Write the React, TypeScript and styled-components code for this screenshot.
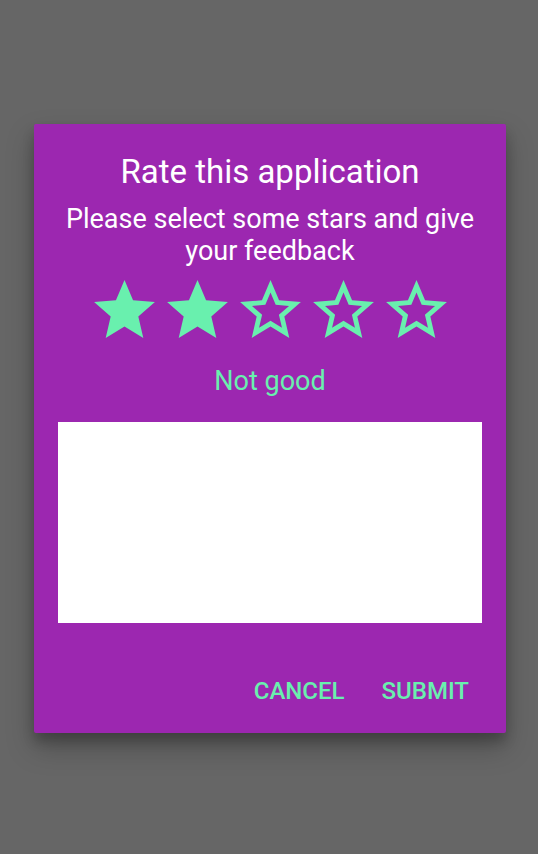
import React, { useState } from "react";
import styled, { createGlobalStyle } from "styled-components";

const GlobalStyle = createGlobalStyle`
  html, body {
    margin: 0;
    padding: 0;
    background: #666666;
  }
  body {
    font-family: Roboto, "Noto Sans", "Liberation Sans", sans-serif;
  }
`;

const Backdrop = styled.div`
  width: 538px;
  height: 854px;
  box-sizing: border-box;
  padding-top: 124px;
  display: flex;
  align-items: flex-start;
  justify-content: center;
  background: #666666;
`;

const Dialog = styled.div`
  width: 472px;
  height: 609px;
  margin-left: 2px;
  box-sizing: border-box;
  background: #9c27b0;
  border-radius: 2px;
  box-shadow: 0 14px 28px rgba(0, 0, 0, 0.25), 0 8px 12px rgba(0, 0, 0, 0.2);
  display: flex;
  flex-direction: column;
  align-items: center;
  padding: 28px 24px 0;
`;

const Title = styled.h1`
  margin: 0;
  font-size: 33px;
  line-height: 40px;
  font-weight: 400;
  color: #ffffff;
  text-align: center;
`;

const Subtitle = styled.p`
  margin: 11px 0 0;
  font-size: 27px;
  line-height: 32px;
  font-weight: 400;
  color: #ffffff;
  text-align: center;
`;

const StarRow = styled.div`
  display: flex;
  flex-shrink: 0;
  margin-top: 7px;
`;

const StarButton = styled.button`
  width: 73px;
  height: 73px;
  padding: 0;
  border: none;
  background: none;
  cursor: pointer;
  display: block;

  svg {
    display: block;
    width: 73px;
    height: 73px;
    fill: #69f0ae;
  }
`;

const RatingLabel = styled.div`
  margin-top: 18px;
  font-size: 27px;
  line-height: 32px;
  color: #69f0ae;
`;

const Feedback = styled.textarea`
  margin-top: 25px;
  width: 424px;
  height: 201px;
  flex-shrink: 0;
  box-sizing: border-box;
  border: none;
  outline: none;
  resize: none;
  background: #ffffff;
  font-family: inherit;
  font-size: 18px;
  padding: 8px;
`;

const Actions = styled.div`
  align-self: stretch;
  display: flex;
  justify-content: flex-end;
  gap: 37px;
  margin-top: 54px;
  padding-right: 13px;
`;

const ActionButton = styled.button`
  border: none;
  background: none;
  padding: 0;
  font-family: inherit;
  font-size: 24px;
  line-height: 28px;
  font-weight: 500;
  color: #69f0ae;
  text-transform: uppercase;
  cursor: pointer;
`;

const FULL =
  "M12 17.27L18.18 21l-1.64-7.03L22 9.24l-7.19-.61L12 2 9.19 8.63 2 9.24l5.46 4.73L5.82 21z";
const EMPTY =
  "M22 9.24l-7.19-.62L12 2 9.19 8.63 2 9.24l5.46 4.73L5.82 21 12 17.27 18.18 21l-1.63-7.03L22 9.24zM12 15.4l-3.76 2.27 1-4.28-3.32-2.88 4.38-.38L12 6.1l1.71 4.04 4.38.38-3.32 2.88 1 4.28L12 15.4z";

const labels = ["Very bad", "Not good", "Quite ok", "Very good", "Excellent"];

const Star = ({ filled, onClick }: { filled: boolean; onClick: () => void }) => (
  <StarButton onClick={onClick}>
    <svg viewBox="0 0 24 24">
      <path d={filled ? FULL : EMPTY} />
    </svg>
  </StarButton>
);

const App = () => {
  const [rating, setRating] = useState(2);

  return (
    <Backdrop>
      <GlobalStyle />
      <Dialog>
        <Title>Rate this application</Title>
        <Subtitle>
          Please select some stars and give
          <br />
          your feedback
        </Subtitle>
        <StarRow>
          {[1, 2, 3, 4, 5].map(n => (
            <Star key={n} filled={n <= rating} onClick={() => setRating(n)} />
          ))}
        </StarRow>
        <RatingLabel>{labels[rating - 1]}</RatingLabel>
        <Feedback />
        <Actions>
          <ActionButton>Cancel</ActionButton>
          <ActionButton>Submit</ActionButton>
        </Actions>
      </Dialog>
    </Backdrop>
  );
};

export default App;
